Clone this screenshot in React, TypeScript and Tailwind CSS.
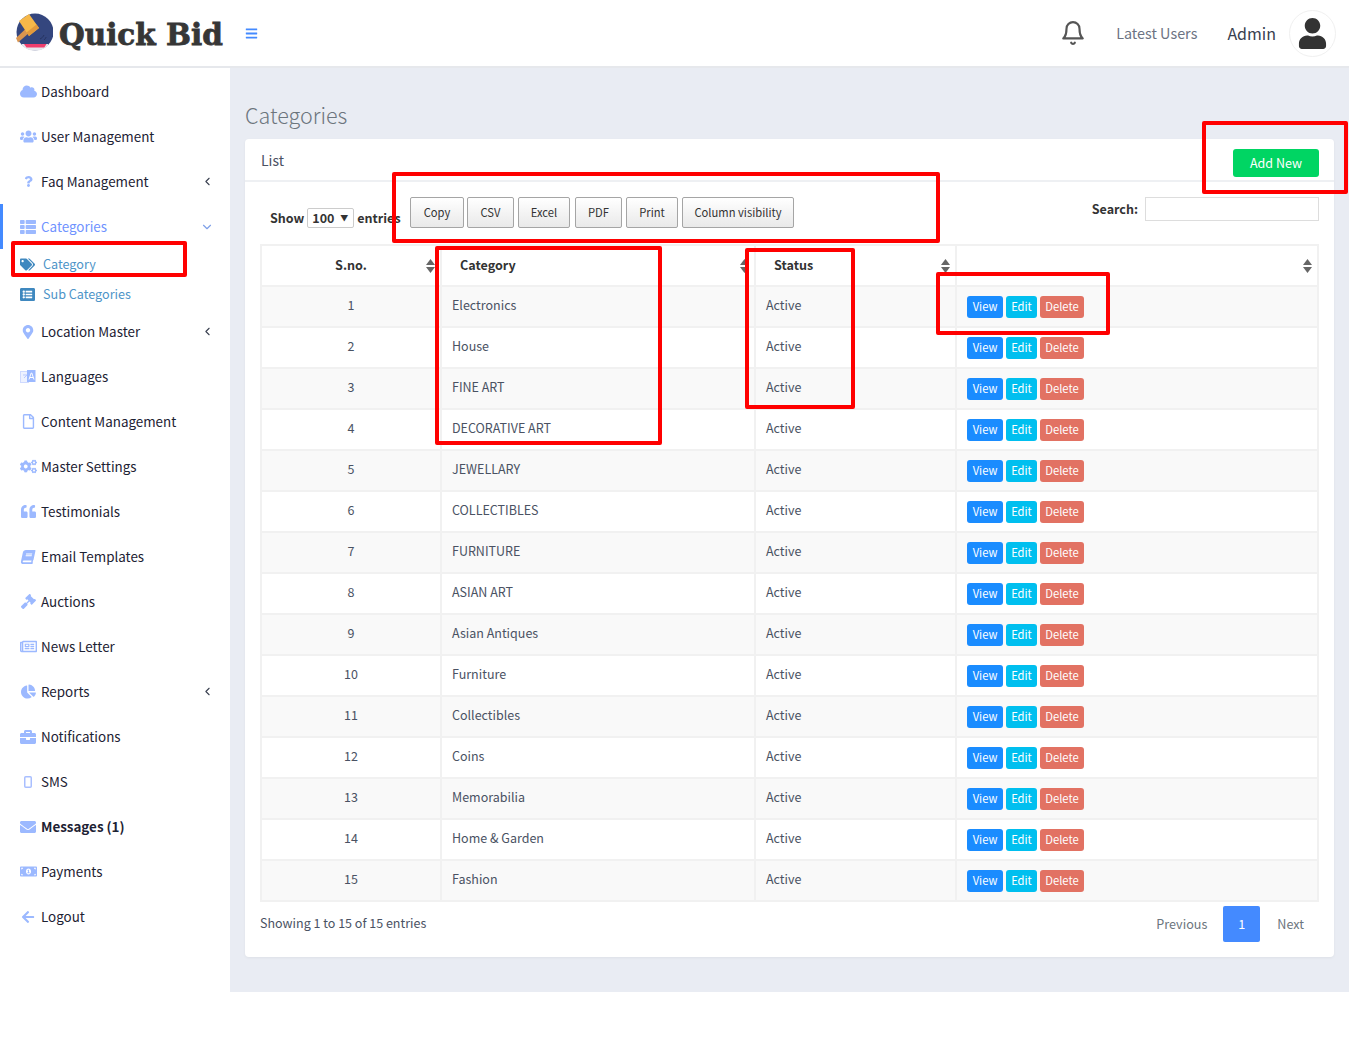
import React from "react";
import {
  FaCloud, FaUsers, FaQuestion, FaThList, FaTags, FaListAlt, FaMapMarkerAlt, FaRegFile, FaCogs,
  FaQuoteLeft, FaBook, FaGavel, FaRegNewspaper, FaChartPie, FaBriefcase, FaEnvelope, FaMoneyBillAlt,
  FaArrowLeft, FaUser, FaBars,
} from "react-icons/fa";
import { LuBell, LuChevronLeft, LuChevronDown } from "react-icons/lu";

const font = { fontFamily: '"Noto Sans CJK SC", "Noto Sans", sans-serif' };

const rows = ["Electronics", "House", "FINE ART", "DECORATIVE ART", "JEWELLARY", "COLLECTIBLES", "FURNITURE", "ASIAN ART", "Asian Antiques", "Furniture", "Collectibles", "Coins", "Memorabilia", "Home & Garden", "Fashion"];

function LangIcon({ className }: { className?: string }) {
  return (
    <svg viewBox="0 0 16 15" width="16" height="15" className={className}>
      <rect x="0.500" y="2.500" width="8" height="11" fill="#eef2ff" stroke="#cfdaff" />
      <path d="M3 6h4M4 9l3-3" stroke="#b9c9ff" fill="none" />
      <path d="M7 1h8.500v12H7z" fill="#9cb9ff" />
      <path d="M9 10.500 11.200 4h.6l2.200 6.500M10 8.500h3" stroke="#fff" strokeWidth="1" fill="none" />
    </svg>
  );
}

function PhoneIcon({ className }: { className?: string }) {
  return (
    <svg viewBox="0 0 8 12" width="8" height="12" className={className}>
      <rect x="0.750" y="0.750" width="6.500" height="10.500" rx="1" fill="none" stroke="#a9bfff" strokeWidth="1.500" />
    </svg>
  );
}

function SkewBook({ className }: { className?: string }) {
  return <FaBook className={className + " -skew-x-12"} />;
}

type Item = { icon: React.ComponentType<{ className?: string }>; label: string; arrow?: boolean; bold?: boolean; size?: string };

const before: Item[] = [
  { icon: FaCloud, label: "Dashboard" },
  { icon: FaUsers, label: "User Management" },
  { icon: FaQuestion, label: "Faq Management", arrow: true, size: "text-[11px]" },
];
const after: Item[] = [
  { icon: FaMapMarkerAlt, label: "Location Master", arrow: true, size: "text-[14px]" },
  { icon: LangIcon, label: "Languages" },
  { icon: FaRegFile, label: "Content Management", size: "text-[15px]" },
  { icon: FaCogs, label: "Master Settings" },
  { icon: FaQuoteLeft, label: "Testimonials", size: "text-[15px]" },
  { icon: SkewBook, label: "Email Templates", size: "text-[14px]" },
  { icon: FaGavel, label: "Auctions", size: "text-[15px]" },
  { icon: FaRegNewspaper, label: "News Letter" },
  { icon: FaChartPie, label: "Reports", arrow: true, size: "text-[15px]" },
  { icon: FaBriefcase, label: "Notifications", size: "text-[16px]" },
  { icon: PhoneIcon, label: "SMS" },
  { icon: FaEnvelope, label: "Messages (1)", bold: true, size: "text-[16px]" },
  { icon: FaMoneyBillAlt, label: "Payments" },
  { icon: FaArrowLeft, label: "Logout", size: "text-[14px]" },
];

function NavRow({ item }: { item: Item }) {
  const Icon = item.icon;
  return (
    <div className="h-[45px] flex items-center pl-[20px] pr-[16px] text-[13.4px] text-[#1d2233]">
      <span className="w-[16px] mr-[5px] flex justify-center shrink-0"><Icon className={(item.size ?? "text-[17px]") + " text-[#9cb9ff] shrink-0"} /></span>
      <span className={item.bold ? "font-bold" : ""}>{item.label}</span>
      {item.arrow && <LuChevronLeft className="ml-auto text-[13px] text-[#3a4050]" />}
    </div>
  );
}

function Sort() {
  return (
    <svg width="9" height="14" viewBox="0 0 9 14" className="absolute right-[5px] top-[13px]">
      <path d="M4.500 0 9 6H0z" fill="#666" />
      <path d="M0 8h9l-4.500 6z" fill="#666" />
    </svg>
  );
}

function Annot({ className }: { className: string }) {
  return <div className={"absolute border-4 border-[#ff0000] rounded-[2px] pointer-events-none " + className} />;
}

function Logo() {
  return (
    <svg width="38" height="38" viewBox="0 0 38 38" className="shrink-0 -mt-[2px]">
      <circle cx="20" cy="19" r="18.500" fill="#34467e" />
      <path d="M7 32.500a18.500 18.500 0 0 0 26 0l0-1.500H7z" fill="#e6e7ec" />
      <path d="M9 31h22.500l-2.200 3.500H11.500z" fill="#ef3e6d" />
      <path d="M1 25 11 15.500l3.500 4L3 29.500z" fill="#d9954f" />
      <path d="M4 8 14 1l10 14-10 8z" fill="#f6b849" />
      <path d="M14 23 24 15l-2.500-3.500L11.500 19.500z" fill="#e29a3c" />
      <path d="M25 26c2-1 3-2 4-4M29 27c1-1 2-2 2-3" stroke="#26335f" strokeWidth="1" fill="none" />
    </svg>
  );
}

export default function App() {
  const btn = "h-[31px] flex items-center justify-center rounded-[2px] border border-[#a5a5a5] bg-gradient-to-b from-white to-[#e9e9e9] text-[11.200px] text-[#333]";
  const act = "h-[22px] flex items-center justify-center rounded-[3px] text-white text-[11.200px]";
  const cell = "border-2 border-[#f1f1f1]";
  return (
    <div className="relative bg-white h-[1060px] overflow-hidden" style={font}>
      <header className="h-[68px] flex items-center border-b-2 border-[#e6e8ec] pl-[15px] pr-[13px] bg-white">
        <Logo />
        <span className="ml-[6px] mt-[3px] text-[29.500px] font-bold text-[#363636] leading-none [-webkit-text-stroke:0.8px_#363636]" style={{ fontFamily: '"DejaVu Serif", serif' }}>Quick Bid</span>
        <FaBars className="ml-[22px] mt-[1px] text-[13px] text-[#448aff]" />
        <LuBell className="ml-auto text-[26px] text-[#555]" />
        <span className="ml-[30px] text-[14.400px] text-[#6c7383]">Latest Users</span>
        <span className="ml-[30px] text-[16px] text-[#38404f]">Admin</span>
        <div className="ml-[13px] w-[47px] h-[47px] rounded-full border border-[#f0f0f0] flex items-center justify-center">
          <FaUser className="text-[31px] text-[#333]" />
        </div>
      </header>
      <div className="flex h-[924px]">
        <aside className="w-[230px] shrink-0 bg-white pt-[1px]">
          {before.map((i) => <NavRow key={i.label} item={i} />)}
          <div className="h-[45px] flex items-center pl-[17px] pr-[16px] border-l-[3px] border-[#448aff] text-[13.400px] text-[#6f93ff]">
            <span className="w-[16px] mr-[5px] flex justify-center shrink-0"><FaThList className="text-[16px] text-[#9cb9ff]" /></span>
            <span>Categories</span>
            <LuChevronDown className="ml-auto text-[14px] text-[#7fa0e8]" />
          </div>
          <div className="h-[31px] flex items-center pl-[20px] text-[12.600px] text-[#4d94c8]">
            <FaTags className="text-[15px] text-[#3f88bf]" />
            <span className="ml-[8px]">Category</span>
          </div>
          <div className="h-[29px] flex items-center pl-[20px] text-[12.600px] text-[#4d94c8]">
            <FaListAlt className="text-[15px] text-[#3f88bf]" />
            <span className="ml-[8px]">Sub Categories</span>
          </div>
          {after.map((i) => <NavRow key={i.label} item={i} />)}
        </aside>
        <main className="flex-1 bg-[#e9ecf3] pl-[15px] pr-[15px]">
          <h1 className="mt-[30px] h-[41px] text-[21.500px] leading-[34px] font-light text-[#6c757d]">Categories</h1>
          <section className="bg-white rounded-[4px] shadow-[0_1px_3px_rgba(0,0,0,0.05)] h-[818px]">
            <div className="h-[43px] flex items-center justify-between border-b-2 border-[#eef0f3] pl-[16px] pr-[15px] pt-[2px] relative">
              <span className="text-[14px] text-[#4a5263]">List</span>
              <button className="absolute right-[15px] top-[10px] w-[86px] h-[28px] rounded-[3px] bg-[#00d563] text-white text-[12.500px]">Add New</button>
            </div>
            <div className="flex items-start h-[62px] pl-[25px] pr-[15px] pt-[15px] text-[#333]">
              <div className="flex items-center text-[12.500px] font-bold mt-[11px] w-[140px] whitespace-nowrap">
                <span>Show</span>
                <span className="mx-[3px] w-[47px] h-[20px] border border-[#ccc] rounded-[2px] flex items-center justify-between px-[4px]">100<span className="text-[8px] text-[#333] mr-[1px]">▼</span></span>
                <span>entries</span>
              </div>
              <div className="flex">
                <button className={btn + " w-[54px]"}>Copy</button>
                <button className={btn + " w-[47px] ml-[3px]"}>CSV</button>
                <button className={btn + " w-[52px] ml-[4px]"}>Excel</button>
                <button className={btn + " w-[47px] ml-[5px]"}>PDF</button>
                <button className={btn + " w-[52px] ml-[4px]"}>Print</button>
                <button className={btn + " w-[112px] ml-[4px]"}>Column visibility</button>
              </div>
              <div className="ml-auto flex items-center text-[12.500px] font-bold">
                <span className="mr-[7px]">Search:</span>
                <div className="w-[174px] h-[24px] border border-[#ddd]" />
              </div>
            </div>
            <table className="ml-[15px] w-[1057px] table-fixed border-collapse text-[12.500px] text-[#4a5263]">
              <colgroup>
                <col className="w-[180px]" /><col className="w-[314px]" /><col className="w-[201px]" /><col className="w-[362px]" />
              </colgroup>
              <thead>
                <tr className="h-[41px] text-[#333] text-[12.600px] font-bold">
                  <th className={cell + " relative text-center"}>S.no.<Sort /></th>
                  <th className={cell + " relative text-left pl-[18px]"}>Category<Sort /></th>
                  <th className={cell + " relative text-left pl-[18px]"}>Status<Sort /></th>
                  <th className={cell + " relative"}><Sort /></th>
                </tr>
              </thead>
              <tbody>
                {rows.map((r, i) => (
                  <tr key={i} className={"h-[41px] " + (i % 2 === 0 ? "bg-[#f9f9f9]" : "bg-white")}>
                    <td className={cell + " text-center pb-[3px]"}>{i + 1}</td>
                    <td className={cell + " pl-[10px] pb-[3px]"}>{r}</td>
                    <td className={cell + " pl-[10px] pb-[3px]"}>Active</td>
                    <td className={cell + " pl-[10px]"}>
                      <div className="flex gap-[3px]">
                        <span className={act + " w-[36px] bg-[#1a8cff]"}>View</span>
                        <span className={act + " w-[31px] bg-[#00bfef]"}>Edit</span>
                        <span className={act + " w-[44px] bg-[#e27263]"}>Delete</span>
                      </div>
                    </td>
                  </tr>
                ))}
              </tbody>
            </table>
            <div className="flex items-center justify-between pl-[15px] pr-[30px] mt-[4px]">
              <span className="text-[12.500px] text-[#4a5263] -mt-[2px]">Showing 1 to 15 of 15 entries</span>
              <div className="flex items-center text-[12.600px] text-[#6c757d]">
                <span className="mr-[16px]">Previous</span>
                <span className="w-[37px] h-[36px] rounded-[2px] bg-[#448aff] text-white flex items-center justify-center">1</span>
                <span className="ml-[17px]">Next</span>
              </div>
            </div>
          </section>
        </main>
      </div>
      <Annot className="left-[1202px] top-[121px] w-[146px] h-[73px]" />
      <Annot className="left-[392px] top-[172px] w-[548px] h-[71px]" />
      <Annot className="left-[435px] top-[246px] w-[227px] h-[199px]" />
      <Annot className="left-[745px] top-[248px] w-[110px] h-[161px]" />
      <Annot className="left-[936px] top-[272px] w-[174px] h-[63px]" />
      <Annot className="left-[11px] top-[241px] w-[176px] h-[36px]" />
    </div>
  );
}
